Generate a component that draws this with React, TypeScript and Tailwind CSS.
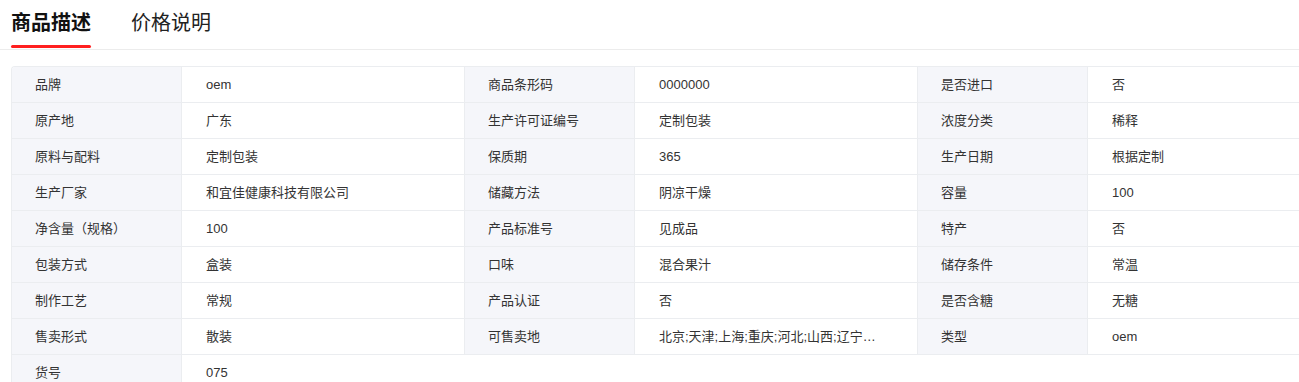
const rows: [string, string][][] = [
  [["品牌", "oem"], ["商品条形码", "0000000"], ["是否进口", "否"]],
  [["原产地", "广东"], ["生产许可证编号", "定制包装"], ["浓度分类", "稀释"]],
  [["原料与配料", "定制包装"], ["保质期", "365"], ["生产日期", "根据定制"]],
  [["生产厂家", "和宜佳健康科技有限公司"], ["储藏方法", "阴凉干燥"], ["容量", "100"]],
  [["净含量（规格）", "100"], ["产品标准号", "见成品"], ["特产", "否"]],
  [["包装方式", "盒装"], ["口味", "混合果汁"], ["储存条件", "常温"]],
  [["制作工艺", "常规"], ["产品认证", "否"], ["是否含糖", "无糖"]],
  [["售卖形式", "散装"], ["可售卖地", "北京;天津;上海;重庆;河北;山西;辽宁…"], ["类型", "oem"]],
  [["货号", "075"]],
];

export default function App() {
  return (
    <div
      className="h-[382px] w-[1299px] overflow-hidden bg-white text-[#333]"
      style={{ fontFamily: '"Microsoft YaHei", "Liberation Sans", "Noto Sans CJK SC", sans-serif' }}
    >
      <div className="flex h-[50px] border-b border-[#ececec]">
        <div className="relative ml-[11px] flex items-center pb-[4px] text-[20px] font-bold text-[#111]">
          商品描述
          <span className="absolute bottom-[1px] left-0 h-[3px] w-full rounded-full bg-[#ff1f1f]" />
        </div>
        <div className="ml-[40px] flex items-center pb-[4px] text-[20px] text-[#222]">价格说明</div>
      </div>

      <div className="ml-[11px] mt-[16px] w-[1400px] overflow-hidden rounded-tl-[4px] border-l border-t border-[#ebedf0]">
        {rows.map((row, i) => (
          <div key={i} className="flex h-[36px]">
            {row.map(([label, value]) => (
              <div key={label} className="flex">
                <div className="flex w-[170px] items-center border-b border-r border-[#ebedf0] bg-[#f5f6fa] pl-[23px] text-[13px]">
                  {label}
                </div>
                <div
                  className={
                    row.length > 1
                      ? "flex w-[283px] items-center border-b border-r border-[#ebedf0] px-[24px] text-[13px]"
                      : "flex w-[283px] items-center border-b border-[#ebedf0] px-[24px] text-[13px]"
                  }
                >
                  <span className="whitespace-nowrap">{value}</span>
                </div>
              </div>
            ))}
          </div>
        ))}
      </div>
    </div>
  );
}
